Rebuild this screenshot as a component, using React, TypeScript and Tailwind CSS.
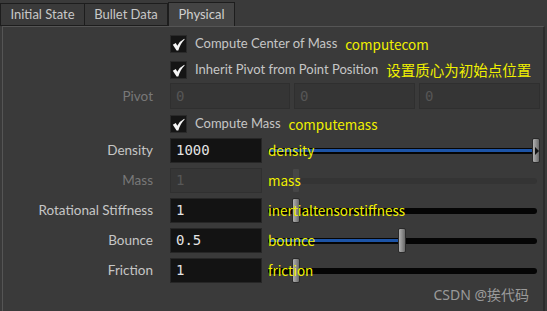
import React from "react";

const F = { fontFamily: "Lato, 'Noto Sans', sans-serif" };
const Y = { fontFamily: "'Noto Sans CJK SC', 'Noto Sans', sans-serif" };
const M = { fontFamily: "'DejaVu Sans Mono', 'Liberation Mono', monospace" };

function Check() {
  return (
    <div className="w-[17px] h-[18px] bg-[#151515] border border-[#2a2a2a] flex items-center justify-center">
      <svg width="13" height="13" viewBox="0 0 13 13">
        <path d="M0.8 6.8 L3.8 5 L5.3 7.8 Q7.8 3 12.3 0.8 L12.6 1.6 Q8.8 5 6.3 12.4 L4.6 12.4 Z" fill="#f6f6f6" />
      </svg>
    </div>
  );
}

function CheckRow({ text, note, mt, cjk }: { text: string; note: string; mt: string; cjk?: boolean }) {
  return (
    <div className={`flex items-center h-[18px] pl-[167px] ${mt}`}>
      <Check />
      <span className="ml-[8px] text-[13px] text-[#c6c6c6]" style={F}>{text}</span>
      <span className={`ml-[8px] text-[#f0f000] ${cjk ? "text-[14.5px]" : "text-[13.5px]"}`} style={Y}>{note}</span>
    </div>
  );
}

type Row = { label: string; value: string; note: string; pos: number; disabled?: boolean; fill?: boolean; over?: boolean };

const rows: Row[] = [
  { label: "Density", value: "1000", note: "density", pos: 264, fill: true, over: true },
  { label: "Mass", value: "1", note: "mass", pos: 24, disabled: true },
  { label: "Rotational Stiffness", value: "1", note: "inertialtensorstiffness", pos: 24 },
  { label: "Bounce", value: "0.5", note: "bounce", pos: 130, fill: true },
  { label: "Friction", value: "1", note: "friction", pos: 24 },
];

function SliderRow({ r }: { r: Row }) {
  return (
    <div className="flex items-center h-[25px]">
      <div className={`w-[150px] text-right text-[13.5px] ${r.disabled ? "text-[#787878]" : "text-[#c6c6c6]"}`} style={F}>
        {r.label}
      </div>
      <div
        className={`ml-[17px] w-[92px] h-[25px] flex items-center pl-[5px] text-[14px] border ${
          r.disabled ? "bg-[#363636] border-[#303030] text-[#575757]" : "bg-[#131313] border-[#262626] text-[#e4e4e4]"
        }`}
        style={M}
      >
        {r.value}
      </div>
      <div className="relative ml-[6px] w-[270px] h-[25px] flex items-center">
        <div className={`w-[269px] h-[6px] rounded-full relative ${r.disabled ? "bg-[#343434]" : "bg-[#050505]"}`}>
          {r.fill && (
            <div className="absolute left-[1px] top-[1px] h-[3px] bg-[#1d54a6]" style={{ width: r.pos }} />
          )}
        </div>
        <div
          className={`absolute top-0 w-[8px] h-[25px] rounded-[2px] border ${
            r.disabled
              ? "bg-[#464646] border-[#3a3a3a]"
              : "bg-gradient-to-r from-[#b0b0b0] via-[#8e8e8e] to-[#6a6a6a] border-[#2a2a2a]"
          }`}
          style={{ left: r.pos }}
        >
          {r.over && (
            <svg className="absolute left-[2px] top-[8px]" width="4" height="8" viewBox="0 0 4 8">
              <path d="M0 0 L4 4 L0 8 Z" fill="#111" />
            </svg>
          )}
        </div>
        <span className="absolute left-0 top-[2px] text-[13.5px] text-[#f0f000] leading-[20px]" style={Y}>
          {r.note}
        </span>
      </div>
    </div>
  );
}

export default function App() {
  return (
    <div className="w-[547px] h-[311px] bg-[#3a3a3a] overflow-hidden flex flex-col" style={F}>
      <div className="h-[26px] flex items-end">
        <div className="w-[85px] h-[23px] border border-[#1d1d1d] flex items-center justify-center text-[13px] text-[#c8c8c8]">Initial State</div>
        <div className="w-[83px] h-[23px] border border-[#1d1d1d] border-l-0 flex items-center justify-center text-[13px] text-[#c8c8c8]">Bullet Data</div>
        <div className="w-[67px] h-[25px] border border-[#1d1d1d] border-b-0 bg-[#444444] flex items-center justify-center text-[13px] text-[#d0d0d0] mb-[-1px]">Physical</div>
      </div>
      <div className="flex-1 ml-[2px] mr-[2px] border-t border-l border-[#555555] border-r-2 border-r-[#2c2c2c] relative">
        <CheckRow text="Compute Center of Mass" note="computecom" mt="mt-[8px]" />
        <CheckRow text="Inherit Pivot from Point Position" note="设置质心为初始点位置" mt="mt-[8px]" cjk />
        <div className="flex items-center h-[26px] mt-[4px]">
          <div className="w-[150px] text-right text-[13.5px] text-[#787878]" style={F}>Pivot</div>
          <div className="ml-[17px] flex gap-[4px]">
            {[120, 121, 121].map((w, i) => (
              <div key={i} className="h-[26px] bg-[#353535] border border-[#2f2f2f] flex items-center pl-[5px] text-[14px] text-[#565656]" style={{ ...M, width: w }}>
                0
              </div>
            ))}
          </div>
        </div>
        <CheckRow text="Compute Mass" note="computemass" mt="mt-[6px]" />
        <div className="flex flex-col gap-[5px] mt-[5px]">
          {rows.map((r) => (
            <SliderRow key={r.label} r={r} />
          ))}
        </div>
        <div className="absolute right-[14px] bottom-[6px] text-[14px] text-[#9a9a9a]" style={{ fontFamily: "'Noto Sans', 'Noto Sans CJK SC', sans-serif" }}>
          CSDN @挨代码
        </div>
      </div>
    </div>
  );
}
